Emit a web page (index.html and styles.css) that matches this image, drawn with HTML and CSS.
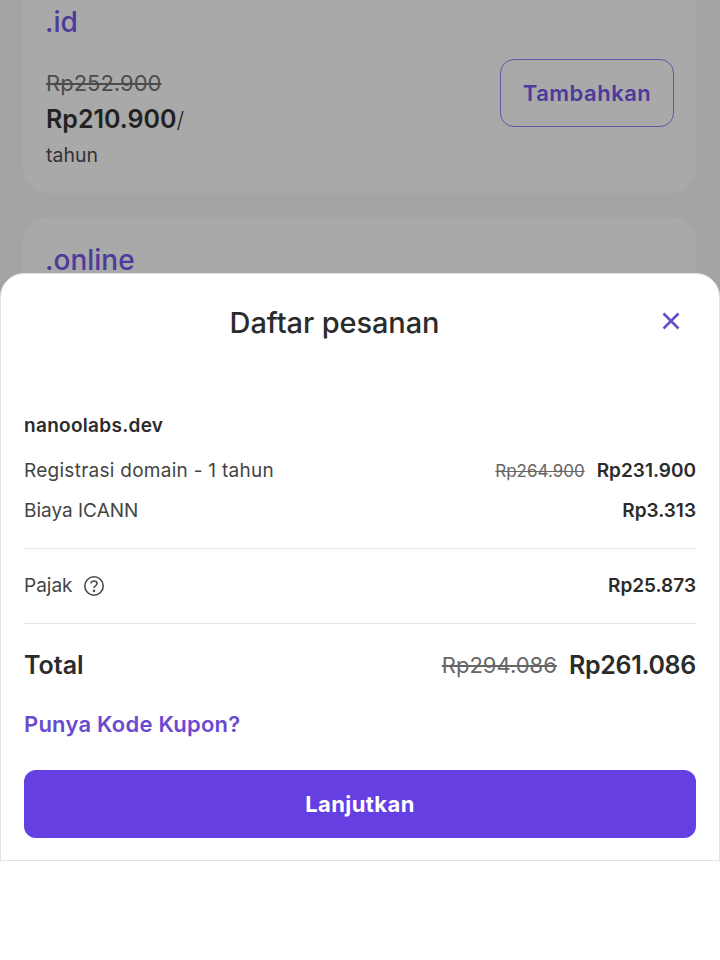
FILE: index.html
```html
<!DOCTYPE html>
<html lang="id">
<head>
  <meta charset="UTF-8" />
  <meta name="viewport" content="width=device-width, initial-scale=1.0"/>
  <title>Daftar pesanan</title>
  <link rel="stylesheet" href="styles.css">
</head>
<body>

  <!-- Halaman di belakang sheet -->
  <div class="backdrop">
    <div class="tld-card first">
      <div class="tld-name">.id</div>
      <div class="tld-row">
        <div class="tld-price">
          <div class="old-price">Rp252.900</div>
          <div class="new-price">Rp210.900<span class="per">/</span></div>
          <div class="period">tahun</div>
        </div>
        <button class="btn-add">Tambahkan</button>
      </div>
    </div>
    <div class="tld-card">
      <div class="tld-name">.online</div>
    </div>
  </div>

  <!-- Sheet pesanan -->
  <div class="sheet">
    <div class="sheet-head">
      <h3>Daftar pesanan</h3>
      <svg class="close-icon" width="20" height="20" viewBox="0 0 20 20">
        <path d="M2.5 2.5L17.5 17.5M17.5 2.5L2.5 17.5" stroke="#6a4bcf" stroke-width="2.6" fill="none"/>
      </svg>
    </div>

    <div class="domain">nanoolabs.dev</div>
    <div class="row row-first">
      <span class="reg-label">Registrasi domain - 1 tahun</span>
      <span class="amounts"><s class="strike-sm">Rp264.900</s><b>Rp231.900</b></span>
    </div>
    <div class="row">
      <span>Biaya ICANN</span>
      <b>Rp3.313</b>
    </div>

    <div class="row row-tax">
      <span class="tax-label">Pajak
        <svg width="22" height="22" viewBox="0 0 22 22" fill="none" stroke="#4a4a4a" stroke-width="1.6">
          <circle cx="11" cy="11" r="9.2"/>
          <path d="M8 8.6C8 6.9 9.3 6 11 6s3 1 3 2.5c0 2.4-3 2.3-3 4.6"/>
          <circle cx="11" cy="15.9" r="0.5"/>
        </svg>
      </span>
      <b>Rp25.873</b>
    </div>

    <div class="row row-total">
      <span>Total</span>
      <span class="amounts"><s class="strike-lg">Rp294.086</s><b>Rp261.086</b></span>
    </div>

    <a class="coupon">Punya Kode Kupon?</a>
    <button class="btn-next">Lanjutkan</button>
  </div>

</body>
</html>
```

FILE: styles.css
```css
body {
  font-family: Inter, 'Noto Sans', sans-serif;
  background: #fff;
  margin: 0;
  color: #2b2b2b;
}
.backdrop {
  height: 300px;
  background: #a4a4a6;
  padding: 0 24px 0 23px;
  overflow: hidden;
}
.tld-card {
  background: #a9a9a9;
  border-radius: 24px;
  padding: 0 22px 0 23px;
  margin-bottom: 24px;
  height: 200px;
}
.tld-card.first {
  margin-top: -24px;
  height: 217px;
  padding-top: 29px;
  box-sizing: border-box;
}
.tld-card:not(.first) {
  padding-top: 26px;
}
.tld-name {
  font-size: 28px;
  line-height: 34px;
  font-weight: 500;
  color: #4d3a9b;
  margin-left: -1px;
}
.tld-row {
  display: flex;
  justify-content: space-between;
  align-items: flex-start;
  margin-top: 20px;
}
.old-price {
  font-size: 22px;
  line-height: 28px;
  color: #4c4c4c;
  text-decoration: line-through;
  margin-top: 10px;
}
.new-price {
  font-size: 25px;
  line-height: 34px;
  font-weight: 600;
  color: #222;
  margin-top: 5px;
}
.per {
  font-weight: 300;
  font-size: 22px;
}
.period {
  font-size: 19.5px;
  line-height: 24px;
  color: #333;
  margin-top: 6px;
}
.btn-add {
  width: 174px;
  height: 68px;
  border: 1px solid #6358ac;
  border-radius: 14px;
  background: none;
  color: #4d3a9b;
  font-family: inherit;
  font-size: 22px;
  font-weight: 600;
  letter-spacing: 0.5px;
}
.sheet {
  position: relative;
  margin-top: -27px;
  height: 588px;
  box-sizing: border-box;
  background: #fff;
  border: 1px solid #e2e2e2;
  border-radius: 24px 24px 0 0;
  padding: 0 23px;
}
.sheet-head {
  display: flex;
  justify-content: center;
  align-items: center;
  height: 96px;
  padding-right: 50px;
  margin: 0 1px 0 0;
  position: relative;
}
.sheet-head h3 {
  margin: 0;
  font-size: 29px;
  font-weight: 500;
  letter-spacing: -0.1px;
}
.close-icon {
  position: absolute;
  right: 14px;
  top: 37px;
}
.domain {
  font-size: 19px;
  line-height: 26px;
  font-weight: 600;
  letter-spacing: 0.3px;
  margin-top: 43px;
}
.row {
  display: flex;
  justify-content: space-between;
  align-items: center;
  font-size: 19px;
  line-height: 26px;
  color: #444;
  margin-top: 14px;
}
.row b {
  font-weight: 600;
  color: #2b2b2b;
}
.row-first {
  margin-top: 19px;
}
.reg-label {
  letter-spacing: 0.27px;
}
.amounts {
  display: flex;
  align-items: center;
  gap: 12px;
}
.strike-sm {
  font-size: 17px;
  color: #666;
}
.strike-lg {
  font-size: 22px;
  color: #666;
}
.row-tax {
  margin-top: 24px;
  padding: 11px 0 12px;
  height: 76px;
  box-sizing: border-box;
  border-top: 1px solid #e4e4e4;
  border-bottom: 1px solid #e4e4e4;
}
.tax-label {
  display: flex;
  align-items: center;
  gap: 10px;
}
.row-total {
  margin-top: 28px;
  font-size: 25px;
  color: #2b2b2b;
}
.row-total b {
  letter-spacing: -0.3px;
}
.row-total > span:first-child {
  font-weight: 600;
}
.coupon {
  display: block;
  margin-top: 31px;
  font-size: 22px;
  line-height: 30px;
  font-weight: 600;
  letter-spacing: 0.22px;
  color: #6a4bcf;
}
.btn-next {
  display: block;
  width: 100%;
  height: 68px;
  margin-top: 31px;
  border: none;
  border-radius: 12px;
  background: #653fe2;
  color: white;
  font-family: inherit;
  font-size: 22px;
  font-weight: 700;
  letter-spacing: 0.4px;
}
```
